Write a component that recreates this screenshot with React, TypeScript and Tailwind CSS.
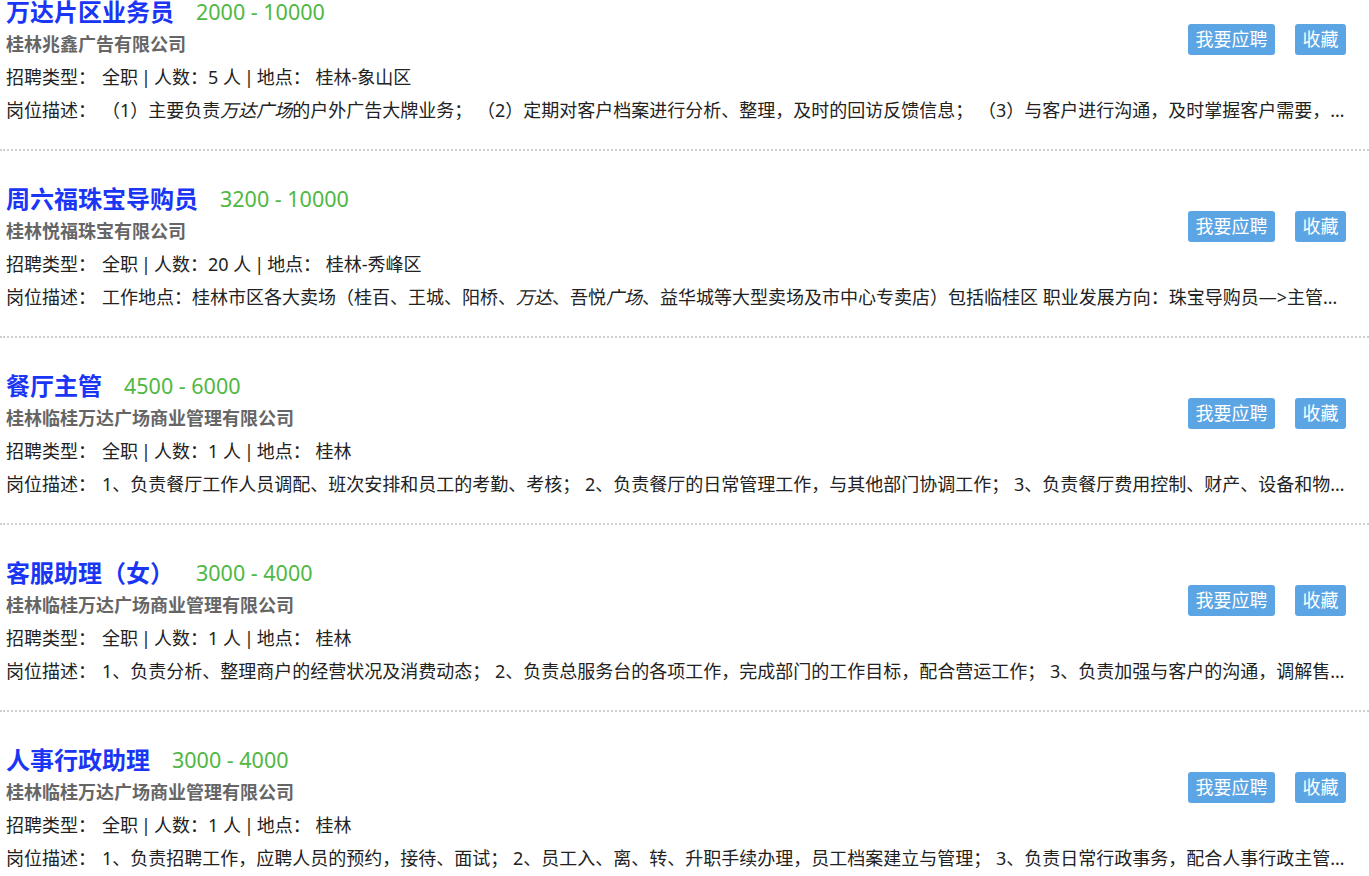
import React from 'react';

type Job = {
  title: string;
  salary: string;
  company: string;
  count: string;
  place: string;
  desc: React.ReactNode;
};

const I = ({ children }: { children: React.ReactNode }) => <i className="italic">{children}</i>;

const jobs: Job[] = [
  {
    title: '万达片区业务员',
    salary: '2000 - 10000',
    company: '桂林兆鑫广告有限公司',
    count: '5',
    place: '桂林-象山区',
    desc: (
      <>
        （1）主要负责<I>万达</I><I>广场</I>的户外广告大牌业务；&nbsp;（2）定期对客户档案进行分析、整理，及时的回访反馈信息；&nbsp;（3）与客户进行沟通，及时掌握客户需要，做好客户服务工作
      </>
    ),
  },
  {
    title: '周六福珠宝导购员',
    salary: '3200 - 10000',
    company: '桂林悦福珠宝有限公司',
    count: '20',
    place: '桂林-秀峰区',
    desc: (
      <>
        工作地点：桂林市区各大卖场（桂百、王城、阳桥、<I>万达</I>、吾悦<I>广场</I>、益华城等大型卖场及市中心专卖店）包括临桂区 职业发展方向：珠宝导购员—&gt;主管—&gt;店长
      </>
    ),
  },
  {
    title: '餐厅主管',
    salary: '4500 - 6000',
    company: '桂林临桂万达广场商业管理有限公司',
    count: '1',
    place: '桂林',
    desc: '1、负责餐厅工作人员调配、班次安排和员工的考勤、考核； 2、负责餐厅的日常管理工作，与其他部门协调工作； 3、负责餐厅费用控制、财产、设备和物资管理',
  },
  {
    title: '客服助理（女）',
    salary: '3000 - 4000',
    company: '桂林临桂万达广场商业管理有限公司',
    count: '1',
    place: '桂林',
    desc: '1、负责分析、整理商户的经营状况及消费动态； 2、负责总服务台的各项工作，完成部门的工作目标，配合营运工作； 3、负责加强与客户的沟通，调解售后纠纷',
  },
  {
    title: '人事行政助理',
    salary: '3000 - 4000',
    company: '桂林临桂万达广场商业管理有限公司',
    count: '1',
    place: '桂林',
    desc: '1、负责招聘工作，应聘人员的预约，接待、面试； 2、员工入、离、转、升职手续办理，员工档案建立与管理； 3、负责日常行政事务，配合人事行政主管工作',
  },
];

const JobItem = ({ job }: { job: Job }) => (
  <div className="border-b-2 border-dotted border-[#cfcfcf] pl-[6px] pr-[23px] pt-[32px] pb-[22px]">
    <div className="flex">
      {/* left: title, company, info */}
      <div className="flex-1 min-w-0">
        <div className="flex items-center h-[32px] leading-[32px]">
          <span className="text-[24px] font-bold text-[#1a36f4]">{job.title}</span>
          <span className="ml-[22px] text-[21.5px] text-[#4fb843]">{job.salary}</span>
        </div>
        <div className="h-[33px] leading-[33px] text-[18px] font-bold text-[#666]">{job.company}</div>
        <div className="h-[33px] leading-[33px] text-[18px] text-[#222] whitespace-nowrap">
          <span className="inline-block w-[96px]">招聘类型：</span>
          全职<span className="mx-[3px]">|</span>人数：{job.count} 人<span className="mx-[3px]">|</span>地点： {job.place}
        </div>
      </div>
      {/* right: actions */}
      <div className="flex gap-[20px] pt-[28px]">
        <button className="w-[87px] h-[31px] rounded-[3px] bg-[#5ca5e4] text-white text-[18px] leading-[31px]">
          我要应聘
        </button>
        <button className="w-[51px] h-[31px] rounded-[3px] bg-[#5ca5e4] text-white text-[18px] leading-[31px]">
          收藏
        </button>
      </div>
    </div>
    <div className="h-[33px] leading-[33px] text-[18px] text-[#222] whitespace-nowrap overflow-hidden text-ellipsis">
      <span className="inline-block w-[96px]">岗位描述：</span>
      {job.desc}
    </div>
  </div>
);

export default function App() {
  return (
    <div className="min-h-screen bg-white overflow-hidden font-['Noto_Sans','Noto_Sans_CJK_SC',sans-serif]">
      <div className="-mt-[36px]">
        {jobs.map((job) => (
          <JobItem key={job.title} job={job} />
        ))}
      </div>
    </div>
  );
}
